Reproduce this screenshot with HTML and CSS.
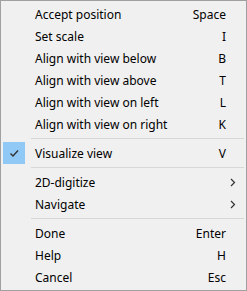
FILE: index.html
```html
<!DOCTYPE html>
<html>
<head>
<meta charset="utf-8">
<link rel="stylesheet" href="styles.css">
</head>
<body>
<div class="menu">
  <div class="item"><span class="gutter"></span><span class="label">Accept position</span><span class="key">Space</span><span class="sub"></span></div>
  <div class="item"><span class="gutter"></span><span class="label">Set scale</span><span class="key">I</span><span class="sub"></span></div>
  <div class="item"><span class="gutter"></span><span class="label">Align with view below</span><span class="key">B</span><span class="sub"></span></div>
  <div class="item"><span class="gutter"></span><span class="label">Align with view above</span><span class="key">T</span><span class="sub"></span></div>
  <div class="item"><span class="gutter"></span><span class="label">Align with view on left</span><span class="key">L</span><span class="sub"></span></div>
  <div class="item"><span class="gutter"></span><span class="label">Align with view on right</span><span class="key">K</span><span class="sub"></span></div>
  <div class="sep"></div>
  <div class="item"><span class="gutter checked"><svg width="22" height="22" viewBox="0 0 22 22"><path d="M7.5 11.5 L10 14 L15 8.5" fill="none" stroke="#333" stroke-width="1.4"/></svg></span><span class="label">Visualize view</span><span class="key">V</span><span class="sub"></span></div>
  <div class="sep"></div>
  <div class="item"><span class="gutter"></span><span class="label">2D-digitize</span><span class="key"></span><span class="sub"><svg width="6" height="9" viewBox="0 0 6 9"><path d="M1 1 L4.5 4.5 L1 8" fill="none" stroke="#333" stroke-width="1.2"/></svg></span></div>
  <div class="item"><span class="gutter"></span><span class="label">Navigate</span><span class="key"></span><span class="sub"><svg width="6" height="9" viewBox="0 0 6 9"><path d="M1 1 L4.5 4.5 L1 8" fill="none" stroke="#333" stroke-width="1.2"/></svg></span></div>
  <div class="sep"></div>
  <div class="item"><span class="gutter"></span><span class="label">Done</span><span class="key">Enter</span><span class="sub"></span></div>
  <div class="item"><span class="gutter"></span><span class="label">Help</span><span class="key">H</span><span class="sub"></span></div>
  <div class="item"><span class="gutter"></span><span class="label">Cancel</span><span class="key">Esc</span><span class="sub"></span></div>
</div>
</body>
</html>
```
FILE: styles.css
```css
html, body {
  margin: 0;
  padding: 0;
  background: #f0f0f0;
}
.menu {
  width: 247px;
  height: 291px;
  box-sizing: border-box;
  border: 1px solid #a0a0a0;
  background: #f0f0f0;
  padding: 2px;
  font-family: "Noto Sans", "Open Sans", sans-serif;
  font-size: 12px;
  color: #000;
  display: flex;
  flex-direction: column;
}
.item {
  display: flex;
  align-items: center;
  height: 22px;
}
.gutter {
  width: 22px;
  height: 22px;
  margin-right: 10px;
  display: flex;
}
.checked {
  background: #90c8f6;
}
.label {
  flex: 1;
  white-space: nowrap;
}
.key {
  white-space: nowrap;
}
.sub {
  width: 18px;
  display: flex;
  justify-content: flex-end;
  padding-right: 8px;
  box-sizing: border-box;
}
.sep {
  height: 7px;
  display: flex;
  align-items: center;
  padding-left: 28px;
}
.sep::before {
  content: "";
  flex: 1;
  height: 1px;
  background: #d7d7d7;
}
```
